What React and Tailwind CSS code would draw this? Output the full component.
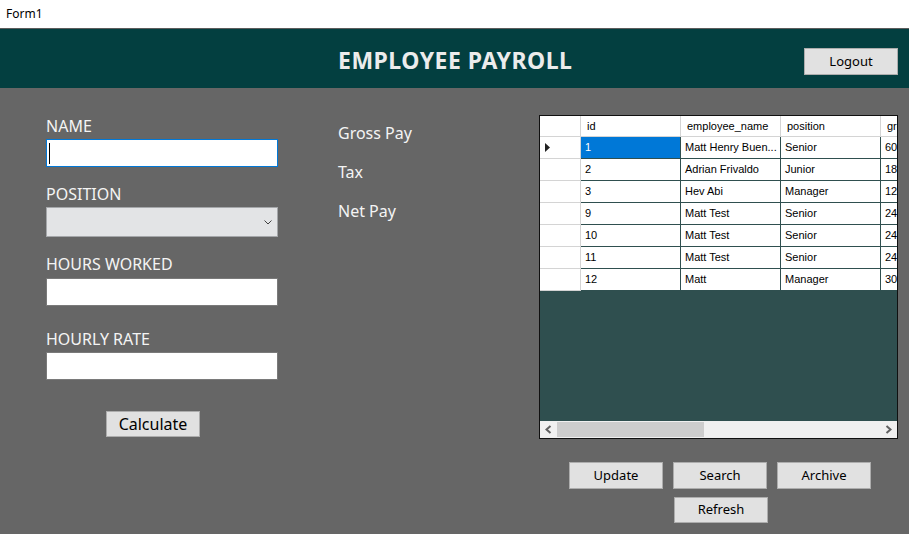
import React from 'react';

const rows = [
  { id: '1', name: 'Matt Henry Buen...', position: 'Senior', gross: '600' },
  { id: '2', name: 'Adrian Frivaldo', position: 'Junior', gross: '180' },
  { id: '3', name: 'Hev Abi', position: 'Manager', gross: '120' },
  { id: '9', name: 'Matt Test', position: 'Senior', gross: '240' },
  { id: '10', name: 'Matt Test', position: 'Senior', gross: '240' },
  { id: '11', name: 'Matt Test', position: 'Senior', gross: '240' },
  { id: '12', name: 'Matt', position: 'Manager', gross: '300' },
];

const ui = { fontFamily: "'Noto Sans', 'Open Sans', sans-serif" };
const grid = { fontFamily: "'Liberation Sans', Arial, sans-serif" };

const WinButton = ({ children, className = '' }) => (
  <button
    className={`flex items-center justify-center bg-[#e1e1e1] border border-[#adadad] text-black ${className}`}
    style={ui}
  >
    {children}
  </button>
);

const Label = ({ children, className = '' }) => (
  <div className={`h-[20px] leading-[20px] text-[16px] text-[#f4f4f4] ${className}`} style={ui}>
    {children}
  </div>
);

const DataGrid = () => (
  <div className="w-[359px] h-[324px] border border-[#101010] bg-[#2f4f4f] flex flex-col overflow-hidden" style={grid}>
    <div className="flex flex-col overflow-hidden">
      {/* header row */}
      <div className="flex h-[21px] bg-white text-[11px] text-black">
        <div className="w-[41px] shrink-0 border-r border-b border-[#d4d4d4]" />
        {['id', 'employee_name', 'position', 'gross_pay'].map((h) => (
          <div
            key={h}
            className="w-[100px] shrink-0 flex items-center pl-[6px] border-r border-b border-[#d4d4d4] whitespace-nowrap overflow-hidden"
          >
            {h}
          </div>
        ))}
      </div>
      {rows.map((r, i) => (
        <div key={r.id} className="flex h-[22px] text-[11px] text-black">
          <div className="w-[41px] shrink-0 bg-white border-r border-b border-[#d4d4d4] flex items-center pl-[5px]">
            {i === 0 && (
              <svg width="5" height="9" viewBox="0 0 5 9">
                <polygon points="0,0 5,4.5 0,9" fill="#222" />
              </svg>
            )}
          </div>
          <div
            className={`w-[100px] shrink-0 flex items-center pl-[4px] border-r border-b border-[#2f4f4f] ${
              i === 0 ? 'bg-[#0078d7] text-white' : 'bg-white'
            }`}
          >
            {r.id}
          </div>
          <div className="w-[100px] shrink-0 flex items-center pl-[4px] bg-white border-r border-b border-[#2f4f4f] whitespace-nowrap overflow-hidden">
            {r.name}
          </div>
          <div className="w-[100px] shrink-0 flex items-center pl-[4px] bg-white border-r border-b border-[#2f4f4f]">
            {r.position}
          </div>
          <div className="w-[100px] shrink-0 flex items-center pl-[4px] bg-white border-b border-[#2f4f4f]">
            {r.gross}
          </div>
        </div>
      ))}
    </div>
    <div className="flex-1" />
    {/* horizontal scrollbar */}
    <div className="h-[17px] bg-[#f0f0f0] flex items-center">
      <div className="w-[17px] h-full flex items-center justify-center">
        <svg width="7" height="9" viewBox="0 0 7 9">
          <polyline points="5.5,1 1.5,4.5 5.5,8" fill="none" stroke="#606060" strokeWidth="2" />
        </svg>
      </div>
      <div className="w-[147px] h-[15px] bg-[#cdcdcd]" />
      <div className="flex-1" />
      <div className="w-[17px] h-full flex items-center justify-center">
        <svg width="7" height="9" viewBox="0 0 7 9">
          <polyline points="1.5,1 5.5,4.5 1.5,8" fill="none" stroke="#606060" strokeWidth="2" />
        </svg>
      </div>
    </div>
  </div>
);

export default function App() {
  return (
    <div className="w-[909px] h-[534px] bg-[#666666] flex flex-col overflow-hidden">
      {/* window title bar */}
      <div className="h-[29px] bg-white border-b border-[#5c5c5c] flex items-center pl-[6px] text-[12px] text-black shrink-0" style={ui}>
        Form1
      </div>

      {/* header */}
      <div className="h-[59px] bg-[#033f40] flex items-center pt-[4px] shrink-0">
        <div className="pl-[338px] text-[23px] font-bold text-[#ececec] tracking-[0.5px]" style={ui}>
          EMPLOYEE PAYROLL
        </div>
        <WinButton className="ml-auto mr-[11px] mt-[2px] w-[94px] h-[27px] text-[13px]">Logout</WinButton>
      </div>

      {/* body */}
      <div className="flex pt-[27px]">
        {/* form */}
        <div className="ml-[46px] w-[232px] flex flex-col">
          <Label className="mt-[1px]">NAME</Label>
          <div className="mt-[3px] h-[28px] bg-white border border-[#0078d7] flex items-center pl-[2px]">
            <div className="w-px h-[21px] bg-black" />
          </div>

          <Label className="mt-[17px]">POSITION</Label>
          <div className="mt-[3px] h-[30px] bg-[#e3e4e6] border border-[#a5a7aa] flex items-center justify-end pr-[5px]">
            <svg width="8" height="5" viewBox="0 0 8 5">
              <polyline points="0.5,0.5 4,4 7.5,0.5" fill="none" stroke="#404040" strokeWidth="1" />
            </svg>
          </div>

          <Label className="mt-[17px]">HOURS WORKED</Label>
          <div className="mt-[4px] h-[28px] bg-white border border-[#7a7a7a]" />

          <Label className="mt-[23px]">HOURLY RATE</Label>
          <div className="mt-[3px] h-[28px] bg-white border border-[#7a7a7a]" />

          <WinButton className="mt-[31px] ml-[60px] w-[94px] h-[26px] text-[16px]">Calculate</WinButton>
        </div>

        {/* results */}
        <div className="ml-[60px] w-[201px] flex flex-col pt-[8px] gap-[19px]">
          <Label>Gross Pay</Label>
          <Label>Tax</Label>
          <Label>Net Pay</Label>
        </div>

        {/* grid + actions */}
        <div className="flex flex-col">
          <DataGrid />
          <div className="flex mt-[23px] ml-[30px] gap-[10px]">
            <WinButton className="w-[94px] h-[27px] text-[13px]">Update</WinButton>
            <WinButton className="w-[94px] h-[27px] text-[13px]">Search</WinButton>
            <WinButton className="w-[94px] h-[27px] text-[13px]">Archive</WinButton>
          </div>
          <div className="flex mt-[8px] ml-[135px]">
            <WinButton className="w-[94px] h-[26px] text-[13px]">Refresh</WinButton>
          </div>
        </div>
      </div>
    </div>
  );
}
